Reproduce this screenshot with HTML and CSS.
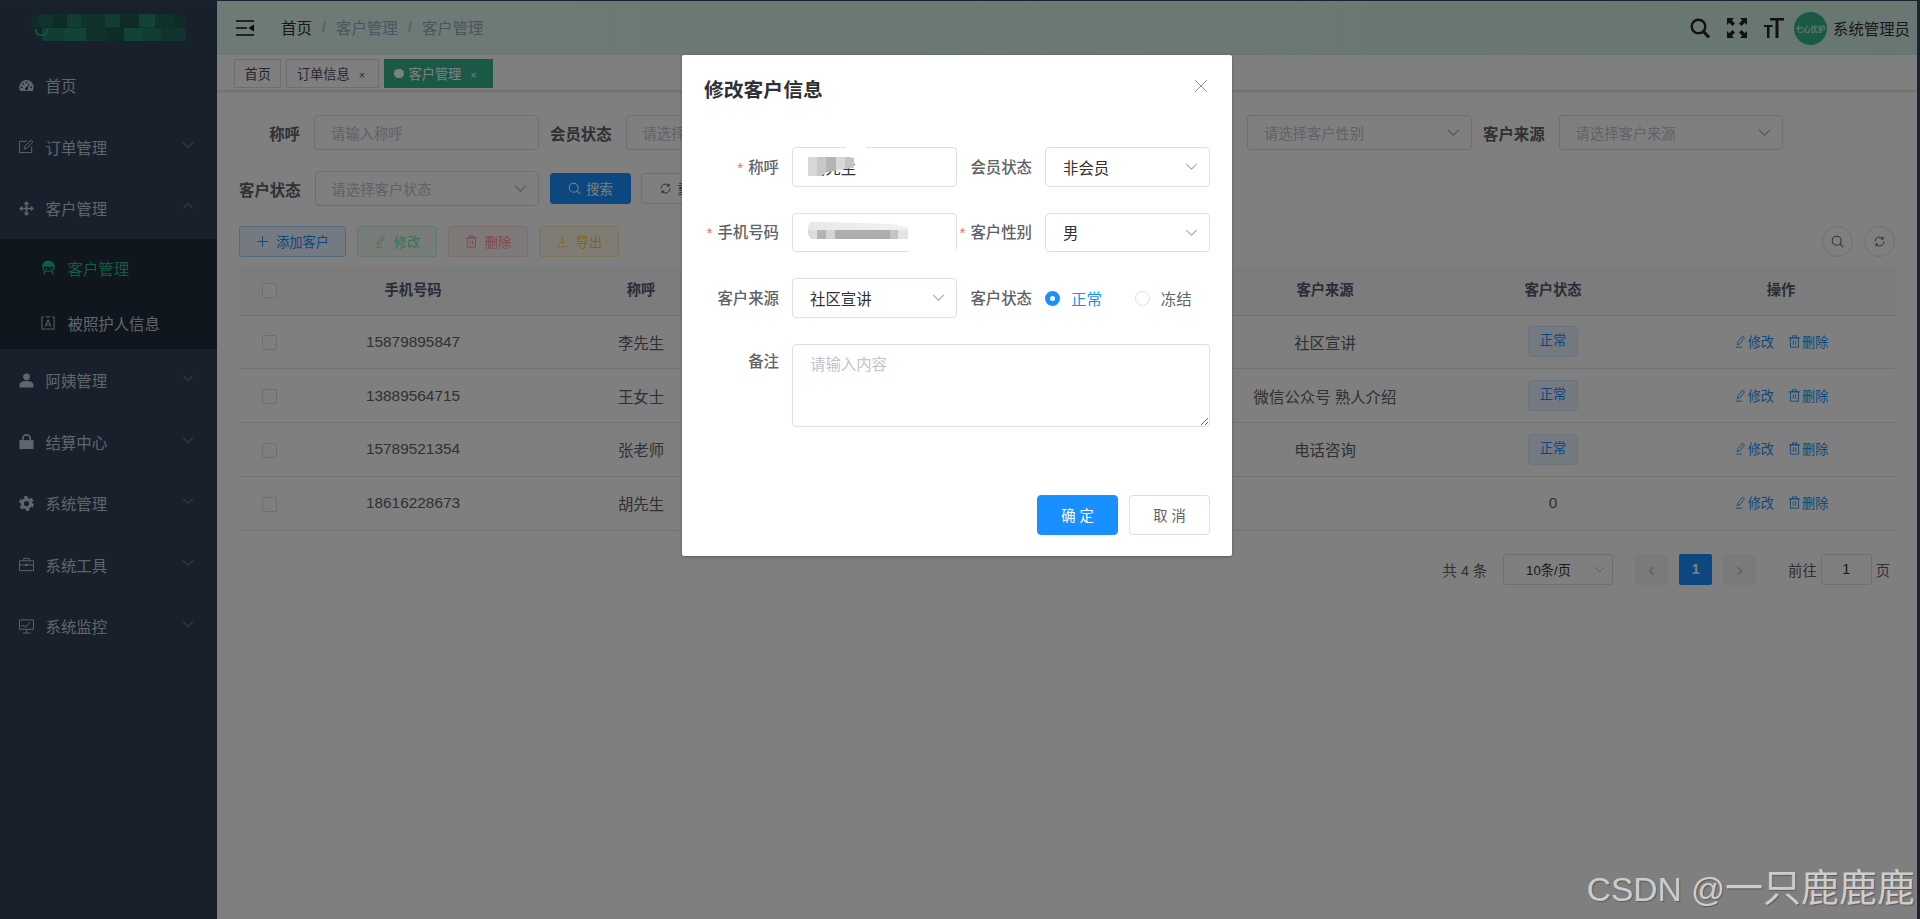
FILE: index.html
```html
<!DOCTYPE html>
<html lang="zh-CN">
<head>
    <meta charset="UTF-8">
    <meta name="viewport" content="width=device-width, initial-scale=1.0">
    <title>客户管理</title>
    <link rel="stylesheet" href="styles.css">
</head>
<body>
    <svg class="defs" width="0" height="0">
        <symbol id="i-gauge" viewBox="0 0 16 16"><path fill="currentColor" d="M8 2.2A7.6 7.6 0 0 0 .4 9.8c0 1.5.4 2.8 1.1 4h13c.7-1.2 1.1-2.500 1.1-4A7.6 7.6 0 0 0 8 2.2z"/><g fill="#304156"><circle cx="3" cy="9.8" r="1"/><circle cx="4.6" cy="6.2" r="1"/><circle cx="8" cy="4.8" r="1"/><circle cx="13" cy="9.8" r="1"/><circle cx="8" cy="11.4" r="1.6"/><path d="M7.4 11l3.4-5.2.8.4-2.8 5.6z"/></g></symbol>
        <symbol id="i-edit" viewBox="0 0 16 16"><path fill="none" stroke="currentColor" d="M13.5 8v6.5h-13v-12h8"/><path fill="none" stroke="currentColor" d="M5.5 10.5l.6-2.6L12.800 1.200l2 2-6.700 6.700z"/></symbol>
        <symbol id="i-move" viewBox="0 0 16 16"><path fill="none" stroke="currentColor" stroke-width="1.800" d="M8 2v12M2 8h12"/><path fill="currentColor" d="M8 0l3 3.500H5zM8 16l-3-3.500h6zM0 8l3.500-3v6zM16 8l-3.500 3V5z"/></symbol>
        <symbol id="i-robot" viewBox="0 0 16 16"><path fill="currentColor" d="M8 .5A7 7 0 0 0 1 7.200h14A7 7 0 0 0 8 .5z"/><path fill="none" stroke="currentColor" stroke-width="1.300" d="M2 7c0 2.500 1 4 2.800 5h6.400C13 11 14 9.500 14 7M4.500 12l-1.500 3.500M11.500 12l1.500 3.500"/><circle cx="5.800" cy="9.300" r=".9" fill="currentColor"/><circle cx="10.200" cy="9.300" r=".9" fill="currentColor"/></symbol>
        <symbol id="i-card" viewBox="0 0 16 16"><path fill="none" stroke="currentColor" d="M3 2H1v13h13V2h-2M5 2h5"/><path fill="none" stroke="currentColor" d="M4.500 12.500L7.500 5l3 7.500M5.500 10.500h4"/></symbol>
        <symbol id="i-user" viewBox="0 0 16 16"><circle cx="8" cy="4" r="3.600" fill="currentColor"/><path fill="currentColor" d="M.5 15.500V13c0-3 3-4.500 7.500-4.500s7.500 1.500 7.500 4.500v2.500z"/></symbol>
        <symbol id="i-lock" viewBox="0 0 16 16"><path fill="none" stroke="currentColor" stroke-width="1.800" d="M4 7V5a4 4 0 0 1 8 0v2"/><path fill="currentColor" d="M.5 6.500h15V16H.5z"/></symbol>
        <symbol id="i-gear" viewBox="0 0 16 16"><circle cx="8" cy="8" r="4.400" fill="none" stroke="currentColor" stroke-width="3.200"/><circle cx="8" cy="8" r="6.800" fill="none" stroke="currentColor" stroke-width="2.200" stroke-dasharray="4 3.120"/></symbol>
        <symbol id="i-tool" viewBox="0 0 16 16"><path fill="none" stroke="currentColor" d="M.5 4h15v10.500H.5zM5 4V1.500h6V4M.5 8.500h15"/><path fill="currentColor" d="M6.800 7.300h2.400v2.400H6.800z"/></symbol>
        <symbol id="i-screen" viewBox="0 0 16 16"><path fill="none" stroke="currentColor" d="M.5 1h15v10H.5zM8 11v3.500M4 15h8"/><path fill="none" stroke="currentColor" d="M2.500 7.500l3-.5 1.500 2L11.500 3.500"/></symbol>
        <symbol id="i-down" viewBox="0 0 12 12"><path fill="none" stroke="currentColor" d="M1 3.500l5 5 5-5"/></symbol>
        <symbol id="i-up" viewBox="0 0 12 12"><path fill="none" stroke="currentColor" d="M1 8.500l5-5 5 5"/></symbol>
        <symbol id="i-burger" viewBox="0 0 18 16"><path fill="none" stroke="currentColor" stroke-width="1.600" d="M0 1h18M0 8h11M0 15h18"/><path fill="currentColor" d="M12.500 8L18 4.500v7z"/></symbol>
        <symbol id="i-search" viewBox="0 0 16 16"><circle cx="7" cy="7" r="5.500" fill="none" stroke="currentColor" stroke-width="1.300"/><path fill="none" stroke="currentColor" stroke-width="1.300" d="M11 11l4 4"/></symbol>
        <symbol id="i-search-bold" viewBox="0 0 20 20"><circle cx="8.500" cy="8.500" r="6.800" fill="none" stroke="currentColor" stroke-width="2.400"/><path fill="none" stroke="currentColor" stroke-width="3" d="M13.500 13.500l5.500 6"/></symbol>
        <symbol id="i-full" viewBox="0 0 20 20"><path fill="currentColor" d="M0 0h7L4.800 2.200 8 5.400 5.400 8 2.200 4.800 0 7zM20 0v7l-2.200-2.200L14.600 8 12 5.400l3.200-3.200L13 0zM0 20v-7l2.200 2.200L5.400 12 8 14.600l-3.200 3.200L7 20zM20 20h-7l2.200-2.200-3.200-3.200 2.600-2.600 3.200 3.200L20 13z"/></symbol>
        <symbol id="i-size" viewBox="0 0 20 20"><path fill="currentColor" d="M6 0h14v2.500h-5.500V20h-3V2.500H6zM0 7h8.500v2H5.500v11H3V9H0z"/></symbol>
        <symbol id="i-refresh" viewBox="0 0 16 16"><path fill="none" stroke="currentColor" stroke-width="1.200" d="M2.500 8a5.500 5.500 0 0 1 9.500-3.800M13.500 8A5.500 5.500 0 0 1 4 11.800"/><path fill="currentColor" d="M13 1.500v4H9zM3 14.500v-4h4z"/></symbol>
        <symbol id="i-plus" viewBox="0 0 16 16"><path fill="none" stroke="currentColor" stroke-width="1.200" d="M8 1.500v13M1.500 8h13"/></symbol>
        <symbol id="i-pen" viewBox="0 0 16 16"><path fill="none" stroke="currentColor" stroke-width="1.100" d="M4 12l.6-3.200L10.500 1.500l2.500 2-6 7.500zM2 15h8"/></symbol>
        <symbol id="i-trash" viewBox="0 0 16 16"><path fill="none" stroke="currentColor" stroke-width="1.100" d="M3 3.500h10V15H3zM1 3.500h14M5.500 3.500V1h5v2.500M6.500 6.500v5.500M9.500 6.500v5.500"/></symbol>
        <symbol id="i-export" viewBox="0 0 16 16"><path fill="none" stroke="currentColor" stroke-width="1.100" d="M8 2v8.500M4.500 7.500L8 11l3.500-3.500M1.500 14.500h13"/></symbol>
    </svg>

    <div class="app">
        <aside class="sidebar">
            <div class="logo"><span class="logo-blur"></span><span class="logo-hook"></span></div>
            <ul class="menu">
                <li class="menu-item"><svg class="menu-icon"><use href="#i-gauge"/></svg>首页</li>
                <li class="menu-item"><svg class="menu-icon"><use href="#i-edit"/></svg>订单管理<svg class="menu-arrow"><use href="#i-down"/></svg></li>
                <li class="menu-item"><svg class="menu-icon"><use href="#i-move"/></svg>客户管理<svg class="menu-arrow"><use href="#i-up"/></svg></li>
                <li class="sub-item active"><svg class="menu-icon"><use href="#i-robot"/></svg>客户管理</li>
                <li class="sub-item"><svg class="menu-icon"><use href="#i-card"/></svg>被照护人信息</li>
                <li class="menu-item"><svg class="menu-icon"><use href="#i-user"/></svg>阿姨管理<svg class="menu-arrow"><use href="#i-down"/></svg></li>
                <li class="menu-item"><svg class="menu-icon"><use href="#i-lock"/></svg>结算中心<svg class="menu-arrow"><use href="#i-down"/></svg></li>
                <li class="menu-item"><svg class="menu-icon"><use href="#i-gear"/></svg>系统管理<svg class="menu-arrow"><use href="#i-down"/></svg></li>
                <li class="menu-item"><svg class="menu-icon"><use href="#i-tool"/></svg>系统工具<svg class="menu-arrow"><use href="#i-down"/></svg></li>
                <li class="menu-item"><svg class="menu-icon"><use href="#i-screen"/></svg>系统监控<svg class="menu-arrow"><use href="#i-down"/></svg></li>
            </ul>
        </aside>

        <div class="main">
            <header class="navbar">
                <svg class="burger"><use href="#i-burger"/></svg>
                <div class="breadcrumb">
                    <span class="crumb-home">首页</span><span class="crumb-sep">/</span><span>客户管理</span><span class="crumb-sep">/</span><span>客户管理</span>
                </div>
                <div class="nav-right">
                    <svg class="nav-icon"><use href="#i-search-bold"/></svg>
                    <svg class="nav-icon"><use href="#i-full"/></svg>
                    <svg class="nav-icon"><use href="#i-size"/></svg>
                    <span class="avatar">七心优护</span>
                    <span class="nav-user">系统管理员</span>
                </div>
            </header>

            <div class="tags">
                <span class="tag">首页</span>
                <span class="tag">订单信息<i class="tag-close">×</i></span>
                <span class="tag tag-active"><i class="tag-dot"></i>客户管理<i class="tag-close">×</i></span>
            </div>

            <section class="content">
                <form class="search">
                    <div class="search-item"><label class="search-label">称呼</label><div class="box"><span class="holder">请输入称呼</span></div></div>
                    <div class="search-item"><label class="search-label">会员状态</label><div class="box"><span class="holder">请选择会员状态</span><svg class="box-arrow"><use href="#i-down"/></svg></div></div>
                    <div class="search-item"><label class="search-label"></label><div class="box"></div></div>
                    <div class="search-item"><label class="search-label"></label><div class="box"><span class="holder">请选择客户性别</span><svg class="box-arrow"><use href="#i-down"/></svg></div></div>
                    <div class="search-item"><label class="search-label">客户来源</label><div class="box"><span class="holder">请选择客户来源</span><svg class="box-arrow"><use href="#i-down"/></svg></div></div>
                    <div class="search-item"><label class="search-label">客户状态</label><div class="box"><span class="holder">请选择客户状态</span><svg class="box-arrow"><use href="#i-down"/></svg></div></div>
                    <button type="button" class="btn-search"><svg class="btn-icon"><use href="#i-search"/></svg>搜索</button>
                    <button type="button" class="btn-reset"><svg class="btn-icon"><use href="#i-refresh"/></svg>重置</button>
                </form>

                <div class="toolbar">
                    <button type="button" class="tool tool-add"><svg class="btn-icon"><use href="#i-plus"/></svg>添加客户</button>
                    <button type="button" class="tool tool-edit"><svg class="btn-icon"><use href="#i-pen"/></svg>修改</button>
                    <button type="button" class="tool tool-del"><svg class="btn-icon"><use href="#i-trash"/></svg>删除</button>
                    <button type="button" class="tool tool-exp"><svg class="btn-icon"><use href="#i-export"/></svg>导出</button>
                    <div class="tool-right">
                        <span class="circle"><svg class="circle-icon"><use href="#i-search"/></svg></span>
                        <span class="circle"><svg class="circle-icon"><use href="#i-refresh"/></svg></span>
                    </div>
                </div>

                <table class="grid">
                    <colgroup><col class="col-check"><col><col><col><col><col><col><col></colgroup>
                    <thead>
                        <tr><th><span class="check"></span></th><th>手机号码</th><th>称呼</th><th></th><th></th><th>客户来源</th><th>客户状态</th><th>操作</th></tr>
                    </thead>
                    <tbody>
                        <tr><td><span class="check"></span></td><td>15879895847</td><td>李先生</td><td></td><td></td><td>社区宣讲</td><td><span class="status">正常</span></td><td><a class="op"><svg class="op-icon"><use href="#i-pen"/></svg>修改</a><a class="op"><svg class="op-icon"><use href="#i-trash"/></svg>删除</a></td></tr>
                        <tr><td><span class="check"></span></td><td>13889564715</td><td>王女士</td><td></td><td></td><td>微信公众号 熟人介绍</td><td><span class="status">正常</span></td><td><a class="op"><svg class="op-icon"><use href="#i-pen"/></svg>修改</a><a class="op"><svg class="op-icon"><use href="#i-trash"/></svg>删除</a></td></tr>
                        <tr><td><span class="check"></span></td><td>15789521354</td><td>张老师</td><td></td><td></td><td>电话咨询</td><td><span class="status">正常</span></td><td><a class="op"><svg class="op-icon"><use href="#i-pen"/></svg>修改</a><a class="op"><svg class="op-icon"><use href="#i-trash"/></svg>删除</a></td></tr>
                        <tr><td><span class="check"></span></td><td>18616228673</td><td>胡先生</td><td></td><td></td><td></td><td>0</td><td><a class="op"><svg class="op-icon"><use href="#i-pen"/></svg>修改</a><a class="op"><svg class="op-icon"><use href="#i-trash"/></svg>删除</a></td></tr>
                    </tbody>
                </table>

                <div class="pager">
                    <span class="pager-total">共 4 条</span>
                    <span class="pager-size">10条/页<svg class="pager-arrow"><use href="#i-down"/></svg></span>
                    <span class="pager-btn">‹</span>
                    <span class="pager-btn pager-on">1</span>
                    <span class="pager-btn">›</span>
                    <span class="pager-goto">前往</span>
                    <span class="pager-input">1</span>
                    <span class="pager-unit">页</span>
                </div>
            </section>
        </div>

        <div class="mask"></div>

        <div class="dialog">
            <div class="dialog-head">
                <span class="dialog-title">修改客户信息</span>
                <span class="dialog-close"></span>
            </div>
            <div class="form">
                <label class="form-label"><i class="star">*</i>称呼</label>
                <div class="field"><span class="value">胡先生</span><span class="mosaic mosaic-name"></span><span class="smudge smudge-name"></span></div>
                <label class="form-label">会员状态</label>
                <div class="field"><span class="value">非会员</span><svg class="field-arrow"><use href="#i-down"/></svg></div>

                <label class="form-label"><i class="star">*</i>手机号码</label>
                <div class="field"><span class="mosaic mosaic-phone"></span><span class="smudge smudge-phone"></span></div>
                <label class="form-label"><i class="star">*</i>客户性别</label>
                <div class="field"><span class="value">男</span><svg class="field-arrow"><use href="#i-down"/></svg></div>

                <label class="form-label">客户来源</label>
                <div class="field"><span class="value">社区宣讲</span><svg class="field-arrow"><use href="#i-down"/></svg></div>
                <label class="form-label">客户状态</label>
                <div class="radios">
                    <span class="radio radio-on"><i class="radio-dot"></i>正常</span>
                    <span class="radio"><i class="radio-dot"></i>冻结</span>
                </div>

                <label class="form-label note-label">备注</label>
                <textarea class="note" placeholder="请输入内容"></textarea>
            </div>
            <div class="dialog-foot">
                <button type="button" class="btn-ok">确 定</button>
                <button type="button" class="btn-cancel">取 消</button>
            </div>
        </div>

        <div class="watermark"><span class="wm-latin">CSDN @</span>一只鹿鹿鹿</div>
    </div>
</body>
</html>
```

FILE: styles.css
```css
* {
    box-sizing: border-box;
}
html, body {
    height: 100%;
}
body {
    margin: 0;
    padding: 1px 3px 0 0;
    background: #1b2330;
    font-family: "Liberation Sans", "Noto Sans CJK SC", sans-serif;
    font-size: 15.4px;
    color: #606266;
    overflow: hidden;
}
i {
    font-style: normal;
}
.defs {
    position: absolute;
}
.app {
    position: relative;
    display: flex;
    height: 100%;
    overflow: hidden;
    background: #fff;
}

/* sidebar */
.sidebar {
    flex: 0 0 217px;
    background: #304156;
    color: #bfcbd9;
}
.logo {
    position: relative;
    height: 53.500px;
    display: flex;
    align-items: center;
    padding-left: 30px;
}
.logo-blur {
    width: 156px;
    height: 27px;
    clip-path: polygon(0 25%, 5% 0, 92% 0, 100% 15%, 100% 100%, 8% 100%, 5% 55%, 0 40%);
    background:
        linear-gradient(90deg, #1d5a50 0 6%, #20685a 6% 15%, #1d5a50 15% 24%, #237a66 24% 33%, #1f6456 33% 48%, #237a66 48% 58%, #1d5a50 58% 70%, #26866f 70% 80%, #1f6456 80% 92%, #1d5a50 92%) top / 100% 50% no-repeat,
        linear-gradient(90deg, #1a4f48 0 8%, #237a66 8% 22%, #26866f 22% 36%, #1f6456 36% 48%, #1d5a50 48% 60%, #26866f 60% 72%, #237a66 72% 84%, #20685a 84%) bottom / 100% 50% no-repeat;
}
.logo-hook {
    position: absolute;
    left: 35px;
    top: 28px;
    width: 13px;
    height: 7px;
    border: 2px solid #26a07f;
    border-top: 0;
    border-radius: 0 0 5px 5px;
}
.menu {
    list-style: none;
    margin: 0;
    padding: 0;
}
.menu-item, .sub-item {
    display: flex;
    align-items: center;
    height: 61.6px;
    padding-left: 19px;
}
.sub-item {
    height: 55px;
    padding: 2px 0 0 41px;
    background: #1f2d3d;
}
.sub-item.active {
    color: #28b48c;
}
.menu-icon {
    width: 15px;
    height: 15px;
    margin-right: 11.500px;
}
.menu-arrow {
    width: 12px;
    height: 12px;
    margin: -4px 23px 0 auto;
    color: #909aa6;
}

/* top bar and tabs */
.main {
    flex: 1;
    min-width: 0;
}
.navbar {
    display: flex;
    align-items: center;
    height: 54px;
    padding: 0 7px 0 19px;
    background: linear-gradient(90deg, #dcf5ec, #d2eee4);
    box-shadow: 0 1px 4px rgba(0, 21, 41, .08);
}
.burger {
    width: 18px;
    height: 16px;
    margin: -1px 27px 0 0;
    color: #111;
}
.breadcrumb {
    display: flex;
    align-items: center;
    margin-top: -3px;
    color: #97a8be;
}
.crumb-home {
    color: #303133;
}
.crumb-sep {
    margin: 0 10px;
    color: #c0c4cc;
    font-weight: bold;
}
.nav-right {
    display: flex;
    align-items: center;
    margin-left: auto;
    color: #303133;
}
.nav-icon {
    width: 20px;
    height: 20px;
    margin-right: 17px;
    color: #222;
}
.avatar {
    display: flex;
    align-items: center;
    justify-content: center;
    width: 33px;
    height: 33px;
    margin: 0 6px 0 -7px;
    border-radius: 50%;
    background: #35b38d;
    color: #fff;
    font-size: 7.500px;
    white-space: nowrap;
}
.tags {
    display: flex;
    align-items: flex-start;
    gap: 5px;
    height: 36px;
    padding: 4px 0 0 17px;
    border-bottom: 1px solid #d8dce5;
    box-shadow: 0 1px 3px rgba(0, 0, 0, .12);
    background: #fff;
}
.tag {
    display: flex;
    align-items: center;
    height: 29px;
    padding: 0 9.500px;
    border: 1px solid #d8dce5;
    color: #495060;
    font-size: 13.200px;
}
.tag-active {
    padding: 0 9.500px;
    background: #35b38d;
    border-color: #35b38d;
    color: #fff;
}
.tag-dot {
    width: 9.500px;
    height: 9.500px;
    margin-right: 5px;
    border-radius: 50%;
    background: #fff;
}
.tag-close {
    margin: 0 3px 0 9px;
    font-size: 11px;
    transform: translateY(1px);
}
.tag-active .tag-close {
    margin-right: 6px;
}

/* page */
.content {
    padding: 24px 22px 0;
}
.search {
    display: flex;
    flex-wrap: wrap;
    align-items: center;
    row-gap: 21px;
}
.search-item {
    display: flex;
    align-items: center;
    width: 300px;
    margin-right: 11px;
}
.search-label {
    flex: 0 0 75px;
    padding-right: 14px;
    text-align: right;
    font-weight: bold;
    white-space: nowrap;
}
.box {
    position: relative;
    display: flex;
    align-items: center;
    flex: 1;
    height: 35px;
    padding-left: 16px;
    border: 1px solid #dcdfe6;
    border-radius: 4px;
    background: #fff;
}
.holder {
    font-size: 14.300px;
    color: #c0c4cc;
}
.box-arrow {
    width: 13px;
    height: 13px;
    margin-left: auto;
    margin-right: 11px;
    color: #a8abb2;
}
.btn-search, .btn-reset {
    display: flex;
    align-items: center;
    justify-content: center;
    width: 81px;
    height: 31px;
    border: 1px solid #1890ff;
    border-radius: 3px;
    background: #1890ff;
    color: #fff;
    font: inherit;
    font-size: 13.200px;
}
.btn-reset {
    margin-left: 10px;
    background: #fff;
    border-color: #dcdfe6;
    color: #606266;
}
.btn-icon {
    width: 13px;
    height: 13px;
    margin-right: 5px;
}
.toolbar {
    display: flex;
    gap: 11px;
    margin: 20px 0 9px;
}
.tool {
    display: flex;
    align-items: center;
    justify-content: center;
    width: 80px;
    height: 31px;
    border: 1px solid;
    border-radius: 3px;
    font: inherit;
    font-size: 13.200px;
}
.tool .btn-icon {
    margin-right: 7px;
}
.tool-add {
    width: 107px;
    background: #e8f4ff;
    border-color: #a3d3ff;
    color: #1890ff;
}
.tool-edit {
    background: #e7faf0;
    border-color: #a3e8c4;
    color: #13ce66;
    opacity: .6;
}
.tool-del {
    background: #ffeded;
    border-color: #ffc4c4;
    color: #ff4949;
    opacity: .6;
}
.tool-exp {
    background: #fff8e6;
    border-color: #ffdf90;
    color: #ffba00;
    opacity: .75;
}
.tool-right {
    display: flex;
    gap: 11px;
    margin-left: auto;
}
.circle {
    display: flex;
    align-items: center;
    justify-content: center;
    width: 31px;
    height: 31px;
    border: 1px solid #dcdfe6;
    border-radius: 50%;
}
.circle-icon {
    width: 13px;
    height: 13px;
}

/* table */
.grid {
    width: 100%;
    border-collapse: collapse;
    table-layout: fixed;
}
.col-check {
    width: 60px;
}
.grid th {
    height: 49px;
    padding: 0 0 3px;
    background: #f8f8f9;
    color: #515a6e;
    font-size: 14.300px;
    border-bottom: 1px solid #dfe6ec;
}
.grid td {
    height: 53.800px;
    padding: 0;
    text-align: center;
    border-bottom: 1px solid #dfe6ec;
}
.check {
    display: inline-block;
    width: 15px;
    height: 15px;
    border: 1px solid #dcdfe6;
    border-radius: 2px;
    background: #fff;
    vertical-align: middle;
}
th .check {
    transform: translateY(1px);
}
.status {
    display: inline-block;
    width: 50px;
    height: 31px;
    line-height: 27px;
    border: 1px solid #d1e9ff;
    border-radius: 4px;
    background: #e8f4ff;
    color: #1890ff;
    font-size: 13.200px;
    vertical-align: middle;
}
.op {
    display: inline-flex;
    align-items: center;
    margin: 0 7px;
    color: #1890ff;
    font-size: 13.200px;
}
.op-icon {
    width: 13px;
    height: 13px;
    margin-right: 1px;
}

/* pagination */
.pager {
    display: flex;
    justify-content: flex-end;
    align-items: center;
    margin-top: 23px;
    padding-right: 5px;
    font-size: 14.300px;
}
.pager-size {
    position: relative;
    display: flex;
    align-items: center;
    width: 110px;
    height: 31px;
    margin: 0 22px 0 16px;
    padding-left: 22px;
    border: 1px solid #dcdfe6;
    border-radius: 3px;
    color: #303133;
    font-size: 13.200px;
}
.pager-arrow {
    width: 11px;
    height: 11px;
    margin-left: auto;
    margin-right: 7px;
    color: #a8abb2;
}
.pager-btn {
    display: flex;
    align-items: center;
    justify-content: center;
    width: 33px;
    height: 31px;
    margin-right: 11px;
    border-radius: 2px;
    background: #f4f4f5;
    color: #c0c4cc;
    font-size: 20px;
}
.pager-on {
    background: #1890ff;
    color: #fff;
    font-size: 14.300px;
    font-weight: bold;
}
.pager-goto {
    margin-left: 21px;
}
.pager-input {
    width: 51px;
    height: 31px;
    margin: 0 4px;
    line-height: 29px;
    text-align: center;
    border: 1px solid #dcdfe6;
    border-radius: 3px;
    color: #303133;
}

/* modal */
.mask {
    position: absolute;
    inset: 0;
    background: rgba(0, 0, 0, .5);
}
.dialog {
    position: absolute;
    top: 54px;
    left: 682px;
    width: 550px;
    padding: 22px 22px 21px;
    border-radius: 2px;
    background: #fff;
    box-shadow: 0 1px 3px rgba(0, 0, 0, .3);
}
.dialog-head {
    display: flex;
    justify-content: space-between;
    height: 70px;
}
.dialog-title {
    font-size: 19.800px;
    line-height: 26px;
    font-weight: bold;
    color: #303133;
}
.dialog-close {
    width: 12px;
    height: 12px;
    margin: 3px 3px 0 0;
    background:
        linear-gradient(45deg, transparent 46%, #909399 46% 54%, transparent 54%),
        linear-gradient(-45deg, transparent 46%, #909399 46% 54%, transparent 54%);
}
.form {
    display: grid;
    grid-template-columns: 88px 165px 88px 165px;
    grid-auto-rows: 39.600px;
    row-gap: 26px;
    align-items: center;
}
.form-label {
    margin-top: -2px;
    padding-right: 13px;
    text-align: right;
    font-weight: 500;
    white-space: nowrap;
}
.star {
    margin-right: 5px;
    color: #f56c6c;
    font-weight: normal;
}
.field {
    position: relative;
    display: flex;
    align-items: center;
    height: 39.600px;
    padding-left: 17px;
    border: 1px solid #dcdfe6;
    border-radius: 4px;
    color: #303133;
}
.value {
    white-space: nowrap;
}
.field-arrow {
    width: 13px;
    height: 13px;
    margin-left: auto;
    margin-right: 11px;
    color: #a8abb2;
}
.mosaic {
    position: absolute;
    background: linear-gradient(90deg, #d8d8d8 0 20%, #c8c8c8 20% 40%, #b4b4b4 40% 60%, #d8d8d8 60% 80%, #c4c4c4 80%);
}
.mosaic-name {
    top: 9px;
    left: 15px;
    width: 46px;
    height: 19px;
    clip-path: polygon(0 0, 100% 0, 100% 55%, 40% 80%, 30% 100%, 0 100%);
}
.mosaic-phone {
    top: 8px;
    left: 15px;
    width: 100px;
    height: 18px;
    clip-path: polygon(3% 0, 85% 14%, 100% 30%, 100% 100%, 3% 100%, 0 70%, 0 25%);
    background:
        linear-gradient(90deg, #dcdcdc 0 9%, #b4b4b4 9% 18%, #d4d4d4 18% 27%, #aeaeae 27% 82%, #c4c4c4 82% 90%, #e4e4e4 90%) bottom / 100% 52% no-repeat,
        linear-gradient(90deg, #e8e8e8, #f2f2f2) top / 100% 48% no-repeat;
}
.smudge {
    position: absolute;
    border-radius: 50%;
    background: #fff;
}
.smudge-name {
    top: -3px;
    left: 50px;
    width: 26px;
    height: 13px;
}
.smudge-phone {
    bottom: -3px;
    right: -1px;
    width: 50px;
    height: 7px;
}
.radios {
    display: flex;
    gap: 33px;
    margin-top: 1px;
}
.radio {
    display: flex;
    align-items: center;
    gap: 11px;
}
.radio-dot {
    width: 15px;
    height: 15px;
    border: 1px solid #dcdfe6;
    border-radius: 50%;
}
.radio-on {
    color: #1890ff;
}
.radio-on .radio-dot {
    border: 5px solid #1890ff;
    background: #fff;
}
.note {
    grid-column: 2 / 5;
    grid-row: span 2;
    align-self: start;
    width: 100%;
    height: 83px;
    padding: 7px 17px;
    border: 1px solid #dcdfe6;
    border-radius: 4px;
    font: inherit;
    outline: none;
}
.note::placeholder {
    color: #c0c4cc;
}
.note-label {
    align-self: start;
    line-height: 39.600px;
}
.dialog-foot {
    display: flex;
    justify-content: flex-end;
    gap: 11px;
    margin-top: 46px;
}
.btn-ok, .btn-cancel {
    width: 81px;
    height: 39.600px;
    border: 1px solid #1890ff;
    border-radius: 4px;
    background: #1890ff;
    color: #fff;
    font: inherit;
    font-size: 14.300px;
}
.btn-cancel {
    border-color: #dcdfe6;
    background: #fff;
    color: #606266;
}
.watermark {
    position: absolute;
    right: 2px;
    top: 867px;
    color: #cdcdcd;
    font-size: 38px;
    line-height: 40px;
    text-shadow: 1px 1px 1px #5a5a5a;
    white-space: nowrap;
}
.wm-latin {
    font-size: 33.500px;
}
```
